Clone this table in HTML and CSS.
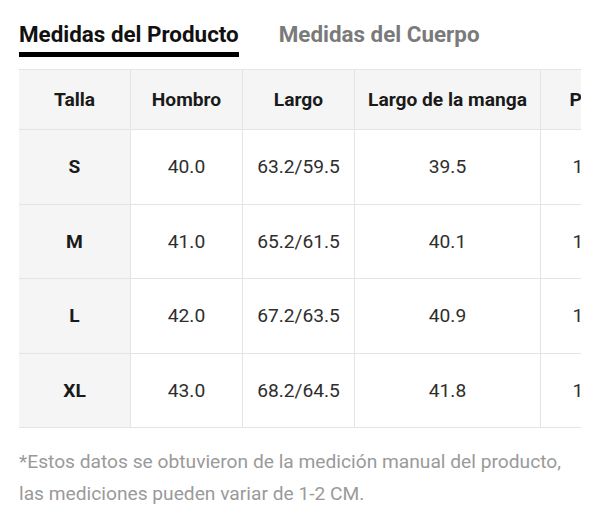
FILE: index.html
```html
<!DOCTYPE html>
<html lang="es">
<head>
<meta charset="utf-8">
<link rel="stylesheet" href="styles.css">
</head>
<body>
<div class="page">
  <div class="tabs">
    <div class="tab active">Medidas del Producto</div>
    <div class="tab">Medidas del Cuerpo</div>
  </div>
  <div class="table-wrap">
    <table class="sizes">
      <thead>
        <tr><th>Talla</th><th>Hombro</th><th>Largo</th><th class="wide">Largo de la manga</th><th>Pecho</th></tr>
      </thead>
      <tbody>
        <tr><th>S</th><td>40.0</td><td>63.2/59.5</td><td>39.5</td><td>104.0</td></tr>
        <tr><th>M</th><td>41.0</td><td>65.2/61.5</td><td>40.1</td><td>108.0</td></tr>
        <tr><th>L</th><td>42.0</td><td>67.2/63.5</td><td>40.9</td><td>112.0</td></tr>
        <tr><th>XL</th><td>43.0</td><td>68.2/64.5</td><td>41.8</td><td>116.0</td></tr>
      </tbody>
    </table>
  </div>
  <p class="note">*Estos datos se obtuvieron de la medición manual del producto,<br>las mediciones pueden variar de 1-2 CM.</p>
  <div class="divider"></div>
</div>
</body>
</html>
```

FILE: styles.css
```css
html, body {
  margin: 0;
  padding: 0;
  background: #fff;
}
body {
  font-family: Roboto, "Noto Sans", sans-serif;
  color: #222;
}
.page {
  padding: 17px 19px 0 19px;
  width: 562px;
}
.tabs {
  display: flex;
  gap: 40px;
  height: 52px;
}
.tab {
  font-size: 22.4px;
  font-weight: 700;
  color: #7a7a7a;
  line-height: 34px;
}
.tab.active {
  color: #111;
  border-bottom: 5px solid #000;
  height: 35px;
}
.table-wrap {
  width: 562px;
  overflow: hidden;
}
.sizes {
  border-collapse: collapse;
  table-layout: fixed;
  width: 633px;
  font-size: 19.2px;
}
.sizes th, .sizes td {
  border: 1px solid #e4e4e4;
  text-align: center;
  padding: 0;
  width: 111px;
  white-space: nowrap;
}
.sizes th.wide {
  width: 185px;
}
.sizes thead th {
  height: 59px;
  background: #f5f5f5;
  font-weight: 700;
  color: #1a1a1a;
}
.sizes tbody th {
  background: #f5f5f5;
  font-weight: 700;
  color: #1a1a1a;
}
.sizes tbody tr {
  height: 74.5px;
}
.sizes td {
  color: #2e2e2e;
}
.sizes thead th:first-child, .sizes tbody th {
  border-left: none;
}
.note {
  margin: 18px 0 0 0;
  font-size: 19.2px;
  line-height: 32px;
  color: #9a9a9a;
}
.divider {
  margin-top: 15px;
  height: 1px;
  background: #e6e6e6;
}
```
